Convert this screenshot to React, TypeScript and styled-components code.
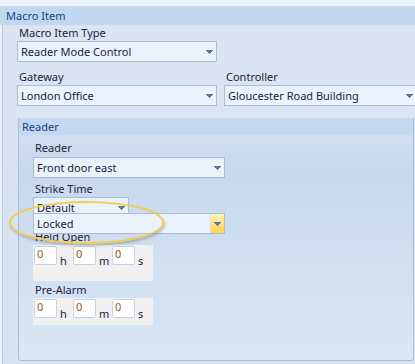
import React from 'react';
import styled, { createGlobalStyle } from 'styled-components';

const GlobalStyle = createGlobalStyle`
  body {
    margin: 0;
    font-family: "Noto Sans", "Open Sans", sans-serif;
  }
`;

const Page = styled.div`
  width: 415px;
  height: 364px;
  overflow: hidden;
  background: #eaf2fb;
  font-size: 11px;
  color: #1c1c40;
`;

const TopStrip = styled.div`
  height: 6px;
  background: #eaf2fb;
`;

const GroupHeader = styled.div`
  height: 19px;
  line-height: 19px;
  padding-left: 6px;
  background: #c1d8ee;
  color: #15428b;
`;

const GroupBody = styled.div`
  margin-left: 2px;
  height: 339px;
  padding-left: 14px;
  border-left: 1px solid #b8cadf;
  background: linear-gradient(#dae5f2, #d5e3f1);
`;

const Label = styled.div<{ $top?: number }>`
  height: 15px;
  line-height: 15px;
  padding-left: 2px;
  margin-top: ${(p) => p.$top ?? 0}px;
  white-space: nowrap;
`;

const Combo = styled.div<{ $width: number; $top?: number }>`
  box-sizing: border-box;
  display: flex;
  align-items: center;
  flex-shrink: 0;
  width: ${(p) => p.$width}px;
  height: 21px;
  margin-top: ${(p) => p.$top ?? 1}px;
  padding-left: 3px;
  border: 1px solid #a7bedb;
  background: #eaf2fb;
  white-space: nowrap;
`;

const ComboText = styled.span`
  flex: 1;
  overflow: hidden;
`;

const ArrowBox = styled.div<{ $hot?: boolean }>`
  display: flex;
  align-items: center;
  justify-content: center;
  align-self: stretch;
  width: 13px;
  border-left: 1px solid ${(p) => (p.$hot ? '#eedc97' : 'transparent')};
  background: ${(p) => (p.$hot ? 'linear-gradient(#fff3c2, #ffe38a 45%, #ffd24f)' : 'transparent')};
`;

const Arrow = () => (
  <svg width="7" height="4" viewBox="0 0 7 4">
    <path d="M0 0h7v1h-1v1h-1v1h-1v1h-1v-1h-1v-1h-1v-1h-1z" fill="#5976a3" />
  </svg>
);

const Dropdown = ({ text, width, top, hot }: { text: string; width: number; top?: number; hot?: boolean }) => (
  <Combo $width={width} $top={top}>
    <ComboText>{text}</ComboText>
    <ArrowBox $hot={hot}>
      <Arrow />
    </ArrowBox>
  </Combo>
);

const Row = styled.div`
  display: flex;
  gap: 7px;
`;

const Field = styled.div`
  display: flex;
  flex-direction: column;
  flex-shrink: 0;
`;

const SubGroup = styled.div`
  box-sizing: border-box;
  width: 396px;
  height: 243px;
  margin: 12px 0 0 1px;
  border: 1px solid #aabed5;
  border-top: none;
  border-radius: 0 0 3px 3px;
  background: linear-gradient(#d3e1f1, #c8d9ee 22%, #d9e7f4);
`;

const SubHeader = styled.div`
  height: 17px;
  line-height: 17px;
  padding-left: 3px;
  background: #c3d9ef;
  color: #15428b;
`;

const SubBody = styled.div`
  padding: 5px 0 0 14px;
`;

const StrikeWrap = styled.div`
  position: relative;
  width: 95px;
`;

const Overlay = styled.div`
  position: absolute;
  left: 0;
  top: 16px;
`;

const Highlight = styled.div`
  position: absolute;
  left: -24px;
  top: 4px;
  width: 155px;
  height: 43px;
  box-sizing: border-box;
  border: 2px solid #f5cb4e;
  border-radius: 50%;
  box-shadow: 1px 2px 3px rgba(60, 60, 60, 0.3);
  pointer-events: none;
`;

const TimePanel = styled.div<{ $pad: number }>`
  display: flex;
  width: 120px;
  margin-top: 1px;
  padding: 1px 0 ${(p) => p.$pad}px 1px;
  box-sizing: border-box;
  background: #f0f0f0;
`;

const TimeBox = styled.div`
  box-sizing: border-box;
  width: 23px;
  height: 19px;
  padding: 0 0 0 2px;
  line-height: 14px;
  border: 1px solid #c9d3df;
  border-radius: 2px;
  background: #ffffff;
  color: #94591a;
`;

const Unit = styled.div`
  width: 16px;
  padding: 8px 0 0 3px;
  box-sizing: border-box;
  line-height: 14px;
`;

const TimeRow = ({ pad }: { pad: number }) => (
  <TimePanel $pad={pad}>
    <TimeBox>0</TimeBox>
    <Unit>h</Unit>
    <TimeBox>0</TimeBox>
    <Unit>m</Unit>
    <TimeBox>0</TimeBox>
    <Unit>s</Unit>
  </TimePanel>
);

export default function App() {
  return (
    <Page>
      <GlobalStyle />
      <TopStrip />
      <GroupHeader>Macro Item</GroupHeader>
      <GroupBody>
        <Field>
          <Label $top={0}>Macro Item Type</Label>
          <Dropdown text="Reader Mode Control" width={200} />
        </Field>
        <Row>
          <Field>
            <Label $top={7}>Gateway</Label>
            <Dropdown text="London Office" width={200} />
          </Field>
          <Field>
            <Label $top={7}>Controller</Label>
            <Dropdown text="Gloucester Road Building" width={193} />
          </Field>
        </Row>
        <SubGroup>
          <SubHeader>Reader</SubHeader>
          <SubBody>
            <Label>Reader</Label>
            <Dropdown text="Front door east" width={192} top={2} />
            <Label $top={3}>Strike Time</Label>
            <StrikeWrap>
              <Dropdown text="Default" width={96} />
              <Overlay>
                <Dropdown text="Locked" width={192} top={0} hot />
              </Overlay>
              <Highlight />
            </StrikeWrap>
            <Label $top={11}>Held Open</Label>
            <TimeRow pad={13} />
            <Label $top={1}>Pre-Alarm</Label>
            <TimeRow pad={4} />
          </SubBody>
        </SubGroup>
      </GroupBody>
    </Page>
  );
}
